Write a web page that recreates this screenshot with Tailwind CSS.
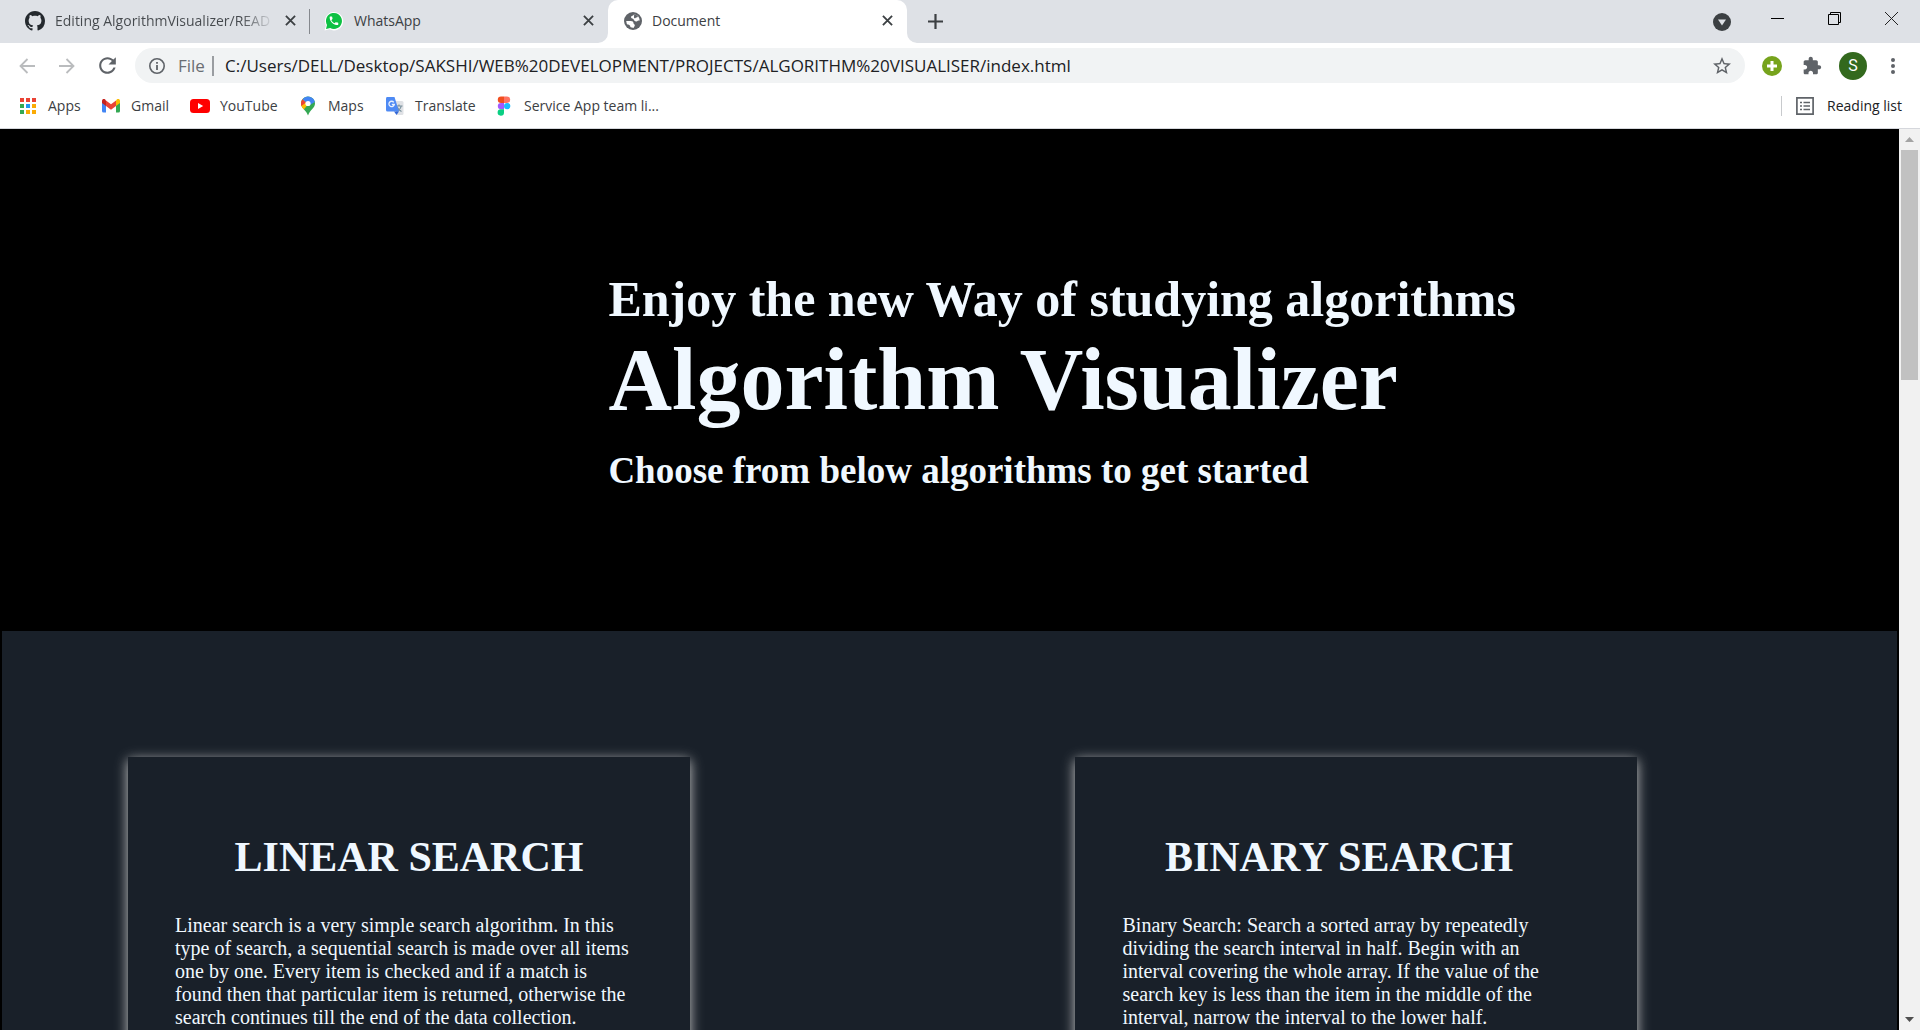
<!DOCTYPE html>
<html lang="en">
<head>
<meta charset="utf-8">
<title>Document</title>
<script src="https://cdn.jsdelivr.net/npm/@tailwindcss/browser@4"></script>
</head>
<body class="flex h-screen flex-col overflow-hidden bg-white font-['Open_Sans',sans-serif] text-[14px] text-[#3c4043]">

<!-- Tab strip -->
<header class="flex h-[43px] shrink-0 bg-[#dee1e6]">
  <div class="flex w-[309px] items-center pb-[2px] pl-[25px] pr-[11px]">
    <svg class="size-5 shrink-0" viewBox="0 0 16 16" fill="#24292e"><path d="M8 0C3.58 0 0 3.58 0 8c0 3.54 2.29 6.53 5.47 7.59.4.07.55-.17.55-.38 0-.19-.01-.82-.01-1.49-2.01.37-2.53-.49-2.69-.94-.09-.23-.48-.94-.82-1.13-.28-.15-.68-.52-.01-.53.63-.01 1.08.58 1.23.82.72 1.21 1.87.87 2.33.66.07-.52.28-.87.51-1.07-1.78-.2-3.64-.89-3.64-3.95 0-.87.31-1.59.82-2.15-.08-.2-.36-1.02.08-2.12 0 0 .67-.21 2.2.82.64-.18 1.32-.27 2-.27s1.36.09 2 .27c1.53-1.04 2.2-.82 2.2-.82.44 1.1.16 1.92.08 2.12.51.56.82 1.27.82 2.15 0 3.07-1.87 3.75-3.65 3.95.29.25.54.73.54 1.48 0 1.07-.01 1.93-.01 2.2 0 .21.15.46.55.38A8.01 8.01 0 0 0 16 8c0-4.42-3.58-8-8-8z"/></svg>
    <button class="ml-[10px] min-w-0 flex-1 overflow-hidden whitespace-nowrap bg-linear-to-r from-[#45494d] from-85% to-transparent bg-clip-text text-left text-transparent">Editing AlgorithmVisualizer/READ</button>
    <button aria-label="Close tab" class="ml-[8px] grid size-[16px] shrink-0 place-items-center"><svg class="size-[11px]" viewBox="0 0 12 12" stroke="#3c4043" stroke-width="2"><path d="M1 1l10 10M11 1L1 11"/></svg></button>
  </div>
  <div class="mt-[9px] h-[25px] w-px shrink-0 bg-[#85888d]"></div>
  <div class="flex w-[298px] items-center pb-[2px] pl-[14px] pr-[12px]">
    <svg class="size-5 shrink-0" viewBox="0 0 20 20"><path d="M.5 19.5l1.4-5A9.2 9.2 0 1 1 5.500 18.200z" fill="#fff"/><path d="M2 18l1-4.100A8 8 0 1 1 6.200 17z" fill="#0dc143"/><path transform="translate(4.200 4) scale(.48)" d="M6.620 10.790c1.440 2.830 3.760 5.140 6.590 6.590l2.200-2.200c.27-.27.67-.36 1.020-.24 1.120.37 2.330.57 3.570.57.55 0 1 .45 1 1V20c0 .55-.45 1-1 1-9.390 0-17-7.610-17-17 0-.55.45-1 1-1h3.500c.55 0 1 .45 1 1 0 1.250.2 2.450.57 3.570.11.35.03.74-.25 1.020l-2.200 2.200z" fill="#fff"/></svg>
    <button class="ml-[10px] flex-1 text-left">WhatsApp</button>
    <button aria-label="Close tab" class="grid size-[16px] shrink-0 place-items-center"><svg class="size-[11px]" viewBox="0 0 12 12" stroke="#3c4043" stroke-width="2"><path d="M1 1l10 10M11 1L1 11"/></svg></button>
  </div>
  <div class="relative flex w-[299px] items-center rounded-t-[10px] bg-white pb-[2px] pl-[16px] pr-[12px]">
    <svg class="absolute bottom-0 -left-[10px] size-[10px]" viewBox="0 0 10 10" fill="#fff"><path d="M10 0v10H0A10 10 0 0 0 10 0z"/></svg>
    <svg class="absolute bottom-0 -right-[10px] size-[10px]" viewBox="0 0 10 10" fill="#fff"><path d="M0 0v10h10A10 10 0 0 1 0 0z"/></svg>
    <svg class="size-[18px] shrink-0" viewBox="0 0 18 18"><circle cx="9" cy="9" r="9" fill="#5f6368"/><path d="M10 2.200C9.800 3.800 7 3.500 7 5.300c0 1.500 2.200 1 2.700 2.200.4 1.100 1.200 2 2.700 1.900 1.200-.1 1.600-.9 3.300-.8A6.800 6.800 0 0 0 10 2.200z" fill="#fff"/><path d="M10 2.200c1.800.3 3 1 4 2.200-1 1.300-2 .6-2.500 1.500-.3.6-1 .5-1.300 0C9.700 5 10.400 3.500 10 2.200z" fill="#5f6368"/><path d="M2.200 9h4.600c1.700 0 2.700.9 2.700 2.200 0 .9 1.300.8 1.300 2 0 1-.9 1.200-.9 2.600A6.900 6.900 0 0 1 2.200 9z" fill="#fff"/><path d="M3 12.500c1.500 0 2.500.3 3 1.300.3.700.5 1.300.4 2L4 15z" fill="#5f6368"/></svg>
    <button class="ml-[10px] flex-1 text-left">Document</button>
    <button aria-label="Close tab" class="grid size-[16px] shrink-0 place-items-center"><svg class="size-[11px]" viewBox="0 0 12 12" stroke="#3c4043" stroke-width="2"><path d="M1 1l10 10M11 1L1 11"/></svg></button>
  </div>
  <button aria-label="New tab" class="ml-[10px] grid w-9 place-items-center"><svg class="size-[15px]" viewBox="0 0 15 15" stroke="#3c4043" stroke-width="2.200"><path d="M7.500 0v15M0 7.500h15"/></svg></button>
  <div class="ml-auto flex">
    <button aria-label="Search tabs" class="mr-[18px] grid w-[18px] place-items-center"><svg class="size-[18px]" viewBox="0 0 18 18"><circle cx="9" cy="9" r="9" fill="#3c4043"/><path d="M5 6.500h8L9 12.500z" fill="#dee1e6"/></svg></button>
    <button aria-label="Minimize" class="grid h-[37px] w-[57px] place-items-center"><svg class="size-[13px]" viewBox="0 0 13 13"><path d="M0 6h13v1H0z"/></svg></button>
    <button aria-label="Restore" class="grid h-[37px] w-[57px] place-items-center"><svg class="size-[13px]" viewBox="0 0 13 13" fill="none" stroke="#000"><path d="M.5 2.500h10v10H.5zM2.500 2.500v-2h10v10h-2"/></svg></button>
    <button aria-label="Close" class="grid h-[37px] w-[57px] place-items-center"><svg class="size-[13px]" viewBox="0 0 13 13" stroke="#222"><path d="M0 0l13 13M13 0L0 13"/></svg></button>
  </div>
</header>

<!-- Toolbar -->
<nav class="flex h-[45px] shrink-0 items-center pr-[9px] pl-[7px]">
  <button aria-label="Back" class="grid w-10 place-items-center"><svg class="size-4" viewBox="0 0 16 16" fill="none" stroke="#babcbe" stroke-width="1.800"><path d="M16 8H1.500M8.500 1L1.500 8l7 7"/></svg></button>
  <button aria-label="Forward" class="grid w-10 place-items-center"><svg class="size-4" viewBox="0 0 16 16" fill="none" stroke="#babcbe" stroke-width="1.800"><path d="M0 8h14.500M7.500 1l7 7-7 7"/></svg></button>
  <button aria-label="Reload" class="grid w-10 place-items-center"><svg class="size-[25px]" viewBox="0 0 24 24" fill="#5f6368"><path d="M17.650 6.350C16.200 4.900 14.210 4 12 4c-4.420 0-7.990 3.580-7.990 8s3.570 8 7.990 8c3.730 0 6.840-2.550 7.730-6h-2.080c-.82 2.330-3.040 4-5.650 4-3.310 0-6-2.690-6-6s2.690-6 6-6c1.660 0 3.140.69 4.220 1.780L13 11h7V4l-2.350 2.350z"/></svg></button>
  <div class="ml-[8px] flex h-[35px] flex-1 items-center rounded-full bg-[#f1f3f4] pl-[14px] pr-[14px] text-[17px]">
    <svg class="size-4" viewBox="0 0 16 16" fill="none" stroke="#5f6368"><circle cx="8" cy="8" r="7.200" stroke-width="1.600"/><path d="M8 7v5M8 4v1.800" stroke-width="1.800"/></svg>
    <label for="url" class="ml-[13px] w-[34px] text-[#6a6e73]">File</label>
    <div class="h-[20px] w-[2px] bg-[#9a9da1]"></div>
    <input id="url" type="text" value="C:/Users/DELL/Desktop/SAKSHI/WEB%20DEVELOPMENT/PROJECTS/ALGORITHM%20VISUALISER/index.html" class="ml-[11px] min-w-0 flex-1 bg-transparent text-[#202124] outline-none">
    <button aria-label="Bookmark this page"><svg class="size-[18px]" viewBox="2 2 20 20" fill="#5f6368"><path d="M22 9.240l-7.190-.62L12 2 9.190 8.630 2 9.240l5.460 4.730L5.820 21 12 17.270 18.180 21l-1.630-7.030L22 9.240zM12 15.400l-3.760 2.270 1-4.280-3.320-2.880 4.380-.38L12 6.100l1.710 4.040 4.380.38-3.320 2.880 1 4.280L12 15.400z"/></svg></button>
  </div>
  <div class="ml-[7px] flex items-center">
    <button aria-label="Add extension" class="grid w-10 place-items-center"><svg class="size-5" viewBox="0 0 20 20"><circle cx="10" cy="10" r="10" fill="#76a31c"/><path d="M10 5v10M5 10h10" stroke="#fff" stroke-width="3"/></svg></button>
    <button aria-label="Extensions" class="grid w-10 place-items-center"><svg class="size-5" viewBox="0 0 24 24" fill="#5f6368"><path d="M20.500 11H19V7c0-1.100-.9-2-2-2h-4V3.500C13 2.120 11.880 1 10.500 1S8 2.120 8 3.500V5H4c-1.100 0-1.990.9-1.990 2v3.800H3.500c1.490 0 2.700 1.210 2.700 2.700s-1.210 2.700-2.700 2.700H2V20c0 1.100.9 2 2 2h3.800v-1.500c0-1.490 1.210-2.700 2.700-2.700 1.490 0 2.700 1.210 2.700 2.700V22H17c1.100 0 2-.9 2-2v-4h1.500c1.380 0 2.500-1.120 2.500-2.500S21.880 11 20.500 11z"/></svg></button>
    <button class="mx-[7px] grid size-7 place-items-center rounded-full bg-[#33691e] font-[Roboto,sans-serif] text-[16px] text-white">S</button>
    <button aria-label="Menu" class="grid w-[37px] place-items-center"><svg class="h-4 w-1" viewBox="0 0 4 16" fill="#5f6368"><circle cx="2" cy="2" r="2"/><circle cx="2" cy="8" r="2"/><circle cx="2" cy="14" r="2"/></svg></button>
  </div>
</nav>

<!-- Bookmarks bar -->
<nav class="flex h-[41px] shrink-0 items-center border-b border-[#d5d7dc] pb-[5px] pl-[18px] pr-[18px] whitespace-nowrap">
  <a href="#" class="flex w-[83px] items-center gap-[10px]"><svg class="h-4 w-5" viewBox="0 0 20 16"><path d="M2 0h4v4H2zM8 0h4v4H8zM14 0h4v4h-4z" fill="#ea4335"/><path d="M2 6h4v4H2zM2 12h4v4H2z" fill="#34a853"/><path d="M8 6h4v4H8z" fill="#2196f3"/><path d="M8 12h4v4H8z" fill="#fbab04"/><path d="M14 6h4v4h-4zM14 12h4v4h-4z" fill="#fbab04"/></svg>Apps</a>
  <a href="#" class="flex w-[89px] items-center gap-[10px]"><svg class="h-4 w-5" viewBox="0 0 20 16"><path d="M1 3v10q0 1.500 1.500 1.500H5V6z" fill="#4285f4"/><path d="M19 3v10q0 1.500-1.500 1.500H15V6z" fill="#34a853"/><path d="M15 2.500V8l4-3V3c0-1.800-2-2.400-3.200-1.400z" fill="#fbbc04"/><path d="M5 8V2.500l5 3.800 5-3.800V8l-5 3.800z" fill="#ea4335"/><path d="M1 3v2l4 3V2.500l-.8-.9C3 .6 1 1.200 1 3z" fill="#c5221f"/></svg>Gmail</a>
  <a href="#" class="flex w-[108px] items-center gap-[10px]"><svg class="h-4 w-5" viewBox="0 0 20 16"><rect y="1" width="20" height="14" rx="3.500" fill="#f00"/><path d="M8 5v6l5.200-3z" fill="#fff"/></svg>YouTube</a>
  <a href="#" class="flex w-[87px] items-center gap-[10px]"><svg class="size-5" viewBox="0 0 20 20"><path d="M3 7.500a7 7 0 0 1 14 0c0 4.500-5 6-7 12-1.600-5.400-7-7-7-12z" fill="#34a853"/><path d="M3 7.500c0 2.500 1.300 4.300 2.800 6L14.500 3A7 7 0 0 0 3 7.500z" fill="#fbbc04"/><path d="M4.500 3.200L8 6.500 3.400 10C3 9 3 8.400 3 7.500c0-1.700.5-3 1.500-4.300z" fill="#ea4335"/><path d="M4.500 3.200a7 7 0 0 1 12.300 2.700L11 9.500 8 6.200z" fill="#4285f4"/><circle cx="10" cy="7.500" r="2.600" fill="#fff"/></svg>Maps</a>
  <a href="#" class="flex w-[109px] items-center gap-[10px]"><svg class="size-5" viewBox="0 0 20 20"><path d="M8 5h9q1.500 0 1.500 1.500v11q0 1.500-1.500 1.500h-5z" fill="#dfe1e5"/><path d="M10.500 10h7M14 8.500V10M11.500 15.500q4-2 4.700-5.500M12.200 11q1 3 4.300 4.500" stroke="#78909c" stroke-width="1.200" fill="none"/><path d="M2 1h7.500L14 15.500H2.500Q1 15.500 1 14V2.500Q1 1 2 1z" fill="#4e8af4"/><path d="M9 15.500h5L11.500 19z" fill="#3367d6"/><path d="M8.800 6.300A2.700 2.700 0 1 0 9.300 8.500H6.800" stroke="#e8f0fe" stroke-width="1.300" fill="none"/></svg>Translate</a>
  <a href="#" class="flex items-center gap-[10px]"><svg class="size-5" viewBox="0 0 20 20"><path d="M10 .5H7a3.200 3.200 0 0 0 0 6.400h3z" fill="#f24e1e"/><path d="M10 .5h3a3.200 3.200 0 0 1 0 6.400h-3z" fill="#ff7262"/><path d="M10 6.900H7a3.200 3.200 0 0 0 0 6.400h3z" fill="#a259ff"/><circle cx="13.200" cy="10.100" r="3.200" fill="#1abcfe"/><path d="M10 13.300H7a3.200 3.200 0 1 0 3 3.200z" fill="#0acf83"/></svg>Service App team li...</a>
  <div class="ml-auto h-5 w-px bg-[#c8cacd]"></div>
  <button class="ml-[14px] flex items-center gap-[13px] text-[#202124]"><svg class="size-[18px]" viewBox="0 0 18 18" fill="none" stroke="#5f6368" stroke-width="1.700"><path d="M.9.900h16.200v16.200H.9z"/><path d="M4 5.500h2M7.500 5.500H14M4 9h2M7.500 9H14M4 12.500h2M7.500 12.500H14" stroke-width="1.500"/></svg>Reading list</button>
</nav>

<div class="flex min-h-0 flex-1">
  <!-- Page -->
  <main class="min-w-0 flex-1 overflow-hidden bg-black px-[2px] font-['Liberation_Serif',serif] text-[#f0f8ff]">
    <section class="pt-[142px] pb-[139px] pl-[32%] font-bold whitespace-nowrap">
      <h2 class="text-[50px] leading-[56px]">Enjoy the new Way of studying algorithms</h2>
      <h1 class="mt-[5px] text-[88px] leading-[96px]">Algorithm Visualizer</h1>
      <h3 class="mt-[22px] text-[37px] leading-[42px]">Choose from below algorithms to get started</h3>
    </section>
    <section class="grid h-[1000px] grid-cols-2 bg-[#192029] pt-[126px]">
      <article class="ml-[126px] w-[562px] bg-[#192029] px-[47px] pt-[76px] shadow-[0_3px_12px_#c8c8c8]">
        <h2 class="text-center text-[42px] leading-[48px] font-bold">LINEAR SEARCH</h2>
        <p class="mt-[33px] pr-2 text-[20px] leading-[23px]">Linear search is a very simple search algorithm. In this type of search, a sequential search is made over all items one by one. Every item is checked and if a match is found then that particular item is returned, otherwise the search continues till the end of the data collection.</p>
      </article>
      <article class="ml-[125px] w-[562px] bg-[#192029] pt-[76px] pr-[81px] pl-[48px] shadow-[0_3px_12px_#c8c8c8]">
        <h2 class="text-center text-[42px] leading-[48px] font-bold">BINARY SEARCH</h2>
        <p class="mt-[33px] text-[20px] leading-[23px]">Binary Search: Search a sorted array by repeatedly dividing the search interval in half. Begin with an interval covering the whole array. If the value of the search key is less than the item in the middle of the interval, narrow the interval to the lower half.</p>
      </article>
    </section>
  </main>

  <!-- Scrollbar -->
  <div class="flex w-[21px] shrink-0 flex-col bg-[#f1f1f1] px-[2px]">
    <button aria-label="Scroll up" class="grid h-[21px] place-items-center"><svg class="h-[5px] w-[9px]" viewBox="0 0 9 5" fill="#a3a3a3"><path d="M0 5l4.500-5L9 5z"/></svg></button>
    <div class="h-[230px] bg-[#c1c1c1]"></div>
    <button aria-label="Scroll down" class="mt-auto grid h-[21px] place-items-center"><svg class="h-[5px] w-[9px]" viewBox="0 0 9 5" fill="#505050"><path d="M0 0l4.500 5L9 0z"/></svg></button>
  </div>
</div>
</body>
</html>
